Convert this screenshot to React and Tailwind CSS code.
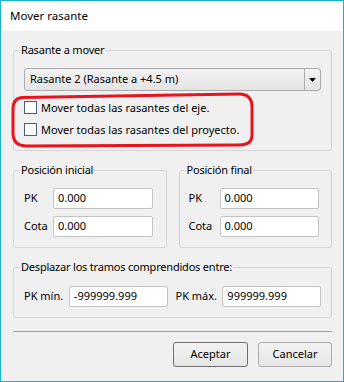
import React from "react";

function Group({ title, children, className = "", lm = "-ml-[4px]" }) {
  return (
    <fieldset className={"border border-[#d5d5d5] rounded-[3px] min-w-0 " + className}>
      <legend className={"px-[1px] leading-[16px] tracking-[-0.2px] " + lm}>{title}</legend>
      {children}
    </fieldset>
  );
}

function Input({ value, className = "" }) {
  return (
    <div className={"h-[21px] bg-white border border-[#c4c4c4] rounded-[2px] flex items-center pl-[4px] " + className}>
      {value}
    </div>
  );
}

function Check({ label }) {
  return (
    <div className="flex items-center h-[13px] gap-[4px]">
      <div className="w-[13px] h-[13px] border border-[#4f5d77] bg-white shrink-0" />
      <span className="leading-[16px]">{label}</span>
    </div>
  );
}

export default function App() {
  return (
    <div className="w-[344px] h-[382px] border border-[#1bb2c8] bg-[#f0f0f0] flex flex-col relative text-[11px] text-black font-['Noto_Sans',sans-serif]">
      <div className="h-[30px] bg-white flex items-center pl-[9px] shrink-0 text-[11.5px]">Mover rasante</div>
      <div className="flex flex-col pl-[12px] pr-[11px] pt-[11px]">
        <Group title="Rasante a mover" className="px-[10px] pt-[10px] pb-[14px]">
          <div className="h-[23px] border border-[#acacac] rounded-[3px] bg-gradient-to-b from-[#f3f3f3] to-[#e4e4e4] flex">
            <div className="flex-1 flex items-center pl-[5px]">Rasante 2 (Rasante a +4.5 m)</div>
            <div className="w-[16px] border-l border-[#acacac] flex items-center justify-center">
              <svg width="7" height="4" viewBox="0 0 7 4"><path d="M0 0h7L3.5 4z" fill="#000" /></svg>
            </div>
          </div>
          <div className="flex flex-col gap-[9px] mt-[10px]">
            <Check label="Mover todas las rasantes del eje." />
            <Check label="Mover todas las rasantes del proyecto." />
          </div>
        </Group>

        <div className="grid grid-cols-2 gap-[12px] mt-[11px]">
          <Group title="Posición inicial" className="pl-[10px] pr-[13px] pt-[10px] pb-[10px]">
            <div className="grid grid-cols-[29px_1fr] gap-y-[7px] items-center">
              <span>PK</span>
              <Input value="0.000" />
              <span>Cota</span>
              <Input value="0.000" />
            </div>
          </Group>
          <Group title="Posición final" lm="-ml-[3px]" className="pl-[9px] pr-[12px] pt-[10px] pb-[10px]">
            <div className="grid grid-cols-[31px_1fr] gap-y-[7px] items-center">
              <span>PK</span>
              <Input value="0.000" />
              <span>Cota</span>
              <Input value="0.000" />
            </div>
          </Group>
        </div>

        <Group title="Desplazar los tramos comprendidos entre:" className="mt-[11px] pl-[10px] pr-[10px] pt-[11px] pb-[10px]">
          <div className="flex items-center">
            <span className="w-[45px]">PK mín.</span>
            <Input value="-999999.999" className="w-[99px]" />
            <span className="ml-[8px] w-[47px]">PK máx.</span>
            <Input value="999999.999" className="w-[99px]" />
          </div>
        </Group>

        <div className="h-px bg-[#a0a0a0] mt-[13px]" />

        <div className="flex justify-end gap-[10px] mt-[10px]">
          <div className="w-[75px] h-[25px] border border-[#6f6f6f] rounded-[3px] bg-gradient-to-b from-[#f2f2f2] to-[#e6e6e6] flex items-center justify-center">Aceptar</div>
          <div className="w-[74px] h-[25px] border border-[#adadad] rounded-[3px] bg-gradient-to-b from-[#f2f2f2] to-[#e6e6e6] flex items-center justify-center">Cancelar</div>
        </div>
      </div>

      <svg className="absolute left-0 top-0 pointer-events-none" width="344" height="382">
        <path d="M22 96.5 L 238 93 Q 251 93 251 106 L 251 134 Q 251 144 238 144 L 26 145 Q 12 145 12 132 L 12 108 Q 12 97 22 96.5 Z" fill="none" stroke="#e5141f" strokeWidth="3" />
      </svg>
    </div>
  );
}
